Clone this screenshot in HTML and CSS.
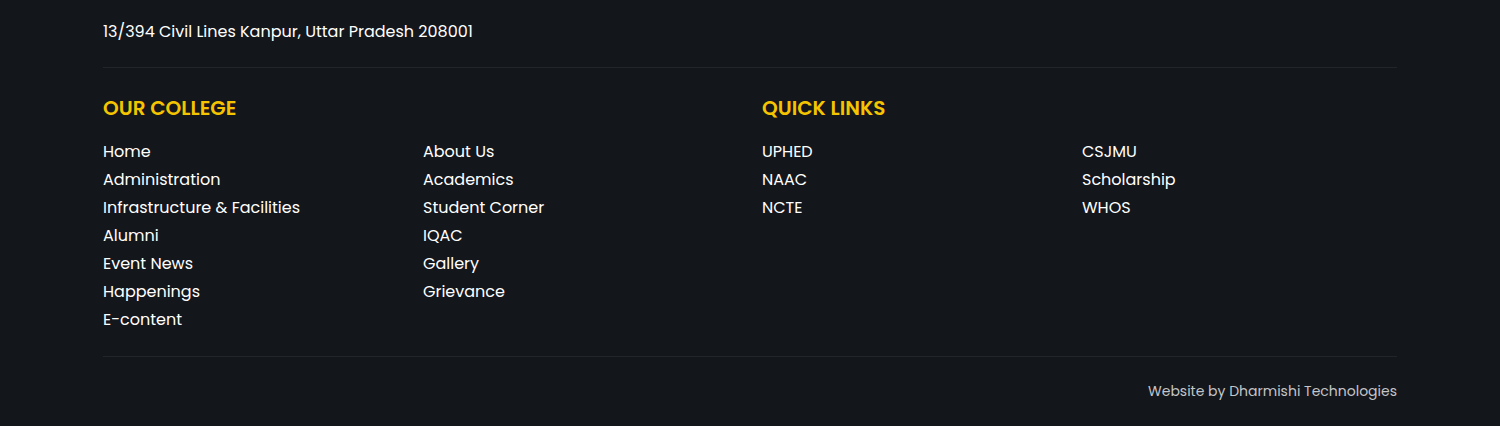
FILE: index.html
```html
<!DOCTYPE html>
<html lang="en">
<head>
<meta charset="utf-8">
<title>Footer</title>
<link rel="stylesheet" href="styles.css">
</head>
<body>
<footer class="footer">
  <div class="container">
    <p class="address">13/394 Civil Lines Kanpur, Uttar Pradesh 208001</p>
    <hr class="divider">
    <div class="sections">
      <section class="section">
        <h3 class="heading">OUR COLLEGE</h3>
        <div class="links">
          <ul class="list">
            <li><a href="#">Home</a></li>
            <li><a href="#">Administration</a></li>
            <li><a href="#">Infrastructure &amp; Facilities</a></li>
            <li><a href="#">Alumni</a></li>
            <li><a href="#">Event News</a></li>
            <li><a href="#">Happenings</a></li>
            <li><a href="#">E-content</a></li>
          </ul>
          <ul class="list">
            <li><a href="#">About Us</a></li>
            <li><a href="#">Academics</a></li>
            <li><a href="#">Student Corner</a></li>
            <li><a href="#">IQAC</a></li>
            <li><a href="#">Gallery</a></li>
            <li><a href="#">Grievance</a></li>
          </ul>
        </div>
      </section>
      <section class="section">
        <h3 class="heading">QUICK LINKS</h3>
        <div class="links">
          <ul class="list">
            <li><a href="#">UPHED</a></li>
            <li><a href="#">NAAC</a></li>
            <li><a href="#">NCTE</a></li>
          </ul>
          <ul class="list">
            <li><a href="#">CSJMU</a></li>
            <li><a href="#">Scholarship</a></li>
            <li><a href="#">WHOS</a></li>
          </ul>
        </div>
      </section>
    </div>
    <hr class="divider divider-bottom">
    <p class="credit">Website by Dharmishi Technologies</p>
  </div>
</footer>
</body>
</html>
```
FILE: styles.css
```css
* { box-sizing: border-box; }
html, body {
  margin: 0;
  padding: 0;
  background: #13161b;
}
body {
  font-family: "Poppins", "Inter", "Noto Sans", sans-serif;
  color: #ffffff;
  height: 426px;
  overflow: hidden;
}
.footer {
  background: #13161b;
}
.container {
  width: 1294px;
  margin: 0 auto;
  padding-top: 20px;
}
.address {
  margin: 0;
  font-size: 16px;
  line-height: 24px;
}
.divider {
  border: 0;
  border-top: 1px solid #22252b;
  margin: 23px 0 0;
}
.divider-bottom {
  margin-top: 22px;
}
.sections {
  display: grid;
  grid-template-columns: 659px 1fr;
  padding-top: 26px;
}
.heading {
  margin: 0;
  color: #f5c400;
  font-size: 20px;
  font-weight: 600;
  line-height: 28px;
}
.links {
  display: grid;
  grid-template-columns: 320px 1fr;
  margin-top: 16px;
}
.list {
  list-style: none;
  margin: 0;
  padding: 0;
}
.list li {
  font-size: 16px;
  line-height: 28px;
}
.list a {
  color: #ffffff;
  text-decoration: none;
}
.credit {
  margin: 0;
  padding-top: 23px;
  text-align: right;
  font-size: 14px;
  line-height: 22px;
  color: #c4c5c8;
}
```
